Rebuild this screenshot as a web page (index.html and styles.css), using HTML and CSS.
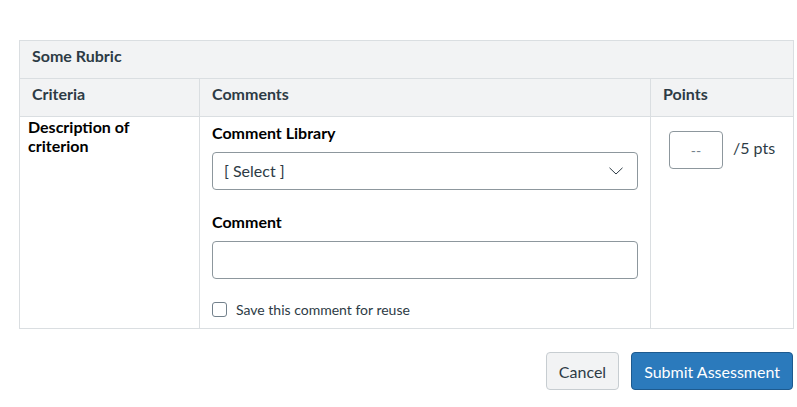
FILE: index.html
```html
<!DOCTYPE html>
<html>
<head>
<meta charset="utf-8">
<link rel="stylesheet" href="styles.css">
</head>
<body>
<div class="wrap">
  <table class="rubric">
    <colgroup>
      <col class="col1">
      <col class="col2">
      <col class="col3">
    </colgroup>
    <thead>
      <tr class="title-row"><th colspan="3">Some Rubric</th></tr>
      <tr class="head-row">
        <th>Criteria</th>
        <th>Comments</th>
        <th>Points</th>
      </tr>
    </thead>
    <tbody>
      <tr class="body-row">
        <td class="crit">Description of criterion</td>
        <td class="comments">
          <div class="label">Comment Library</div>
          <div class="select">
            <span>[ Select ]</span>
            <svg width="14" height="8" viewBox="0 0 14 8"><path d="M0.5 0.8 L7 7 L13.5 0.8" fill="none" stroke="#2d3b45" stroke-width="1"/></svg>
          </div>
          <div class="label label2">Comment</div>
          <div class="input"></div>
          <label class="check"><span class="box"></span><span>Save this comment for reuse</span></label>
        </td>
        <td class="points">
          <div class="pts">
            <div class="pinput">--</div>
            <span class="ptxt">/5 pts</span>
          </div>
        </td>
      </tr>
    </tbody>
  </table>
  <div class="actions">
    <button class="btn cancel">Cancel</button>
    <button class="btn submit">Submit Assessment</button>
  </div>
</div>
</body>
</html>
```
FILE: styles.css
```css
body {
  margin: 0;
  font-family: Lato, "Noto Sans", sans-serif;
  color: #2d3b45;
  background: #fff;
}
.wrap {
  padding: 40px 0 0 19px;
  width: 774px;
}
.rubric {
  border-collapse: collapse;
  width: 774px;
  table-layout: fixed;
}
.col1 { width: 180px; }
.col2 { width: 451px; }
.col3 { width: 143px; }
.rubric th, .rubric td {
  border: 1px solid #dadee1;
  text-align: left;
  padding: 0;
}
.title-row th,
.head-row th {
  background: #f2f3f4;
  height: 32px;
  font-size: 16px;
  font-weight: 700;
  line-height: 20px;
  vertical-align: top;
  padding: 5px 0 0 12px;
}
.body-row td { vertical-align: top; }
.crit {
  padding: 0 8px 0 8px !important;
  font-size: 16px;
  font-weight: 700;
  line-height: 19px;
  color: #000;
}
.comments {
  padding: 5px 12px 0 12px !important;
  height: 206px;
}
.label {
  font-size: 16px;
  font-weight: 700;
  line-height: 22px;
  color: #000;
  margin-bottom: 8px;
}
.label2 { margin-top: 21px; }
.select {
  box-sizing: border-box;
  height: 38px;
  border: 1px solid #8d979d;
  border-radius: 4px;
  display: flex;
  align-items: center;
  justify-content: space-between;
  padding: 0 14px 1px 11px;
  font-size: 16px;
  color: #2d3b45;
}
.input {
  box-sizing: border-box;
  height: 38px;
  border: 1px solid #8d979d;
  border-radius: 4px;
}
.check {
  display: flex;
  align-items: center;
  gap: 9px;
  margin-top: 22px;
  font-size: 14px;
  color: #2d3b45;
}
.box {
  width: 15px;
  height: 15px;
  box-sizing: border-box;
  border: 1px solid #73818c;
  border-radius: 3px;
  background: #fff;
}
.points {
  padding: 14px 0 0 18px !important;
}
.pts {
  display: flex;
  align-items: flex-start;
  gap: 10px;
}
.pinput {
  box-sizing: border-box;
  width: 54px;
  height: 38px;
  border: 1px solid #8d979d;
  border-radius: 4px;
  display: flex;
  align-items: center;
  justify-content: center;
  font-size: 14px;
  color: #73818c;
}
.ptxt {
  font-size: 16px;
  line-height: 20px;
  margin-top: 7px;
}
.actions {
  display: flex;
  justify-content: flex-end;
  gap: 12px;
  margin-top: 23px;
}
.btn {
  font-family: Lato, "Noto Sans", sans-serif;
  font-size: 16px;
  height: 38px;
  border-radius: 4px;
  padding: 0 12px;
  cursor: pointer;
}
.cancel {
  background: #f2f3f4;
  border: 1px solid #c7cdd1;
  color: #2d3b45;
}
.submit {
  background: #2b7abc;
  border: 1px solid #1d5a8f;
  color: #fff;
}
```
